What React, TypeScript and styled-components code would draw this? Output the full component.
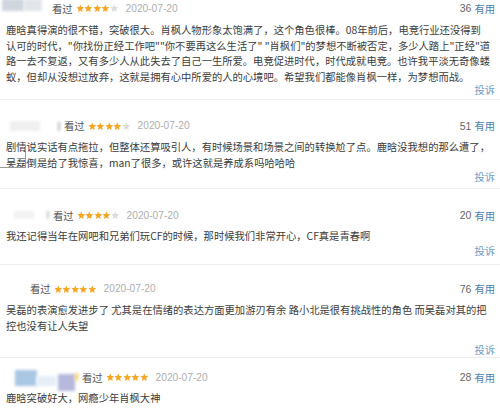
import React from "react";
import styled, { createGlobalStyle } from "styled-components";

const Global = createGlobalStyle`
  html, body { margin: 0; padding: 0; background: #fff; }
  body { font-family: "Noto Sans CJK SC", "Microsoft YaHei", sans-serif; overflow: hidden; }
`;

const Page = styled.div`
  width: 500px;
  height: 411px;
  overflow: hidden;
  position: relative;
  background: #fff;
`;

const Item = styled.div<{ $pt: number; $pb: number; $last?: boolean }>`
  position: relative;
  padding: ${(p) => p.$pt}px 5px ${(p) => p.$pb}px 6px;
  border-bottom: ${(p) => (p.$last ? "none" : "1px solid #eeeeee")};
`;

const Header = styled.div<{ $mb: number }>`
  display: flex;
  align-items: center;
  height: 16px;
  margin-bottom: ${(p) => p.$mb}px;
`;

const Name = styled.div<{ $w: number }>`
  width: ${(p) => p.$w}px;
  height: 14px;
  display: flex;
  align-items: center;
  flex-shrink: 0;
  margin-right: 3px;
  position: relative;
`;

const Tile = styled.span<{ $c: string; $w: number; $h: number; $x: number; $y: number }>`
  position: absolute;
  left: ${(p) => p.$x}px;
  top: ${(p) => p.$y}px;
  width: ${(p) => p.$w}px;
  height: ${(p) => p.$h}px;
  background: ${(p) => p.$c};
  filter: blur(1.5px);
`;

const Watched = styled.span`
  font-size: 10.3px;
  color: #555;
  margin-right: 3px;
`;

const Stars = styled.span`
  display: inline-flex;
  margin-right: 7px;
`;

const DateText = styled.span`
  font-family: "Liberation Sans", Arial, sans-serif;
  font-size: 10.2px;
  color: #aeaeae;
`;

const Vote = styled.span`
  margin-left: auto;
  font-size: 10.3px;
  color: #666;
  display: flex;
  align-items: center;
  gap: 3px;
`;

const Num = styled.span`
  font-family: "Liberation Sans", Arial, sans-serif;
  font-size: 10.5px;
  color: #666;
`;

const Useful = styled.span`
  color: #4a7fb5;
`;

const Body = styled.div`
  font-size: 10.3px;
  line-height: 15.7px;
  color: #3c3c3c;
  white-space: nowrap;
`;

const Report = styled.div<{ $mt: number }>`
  height: 14px;
  line-height: 14px;
  margin-top: ${(p) => p.$mt}px;
  text-align: right;
  font-size: 10.3px;
  color: #6f9bc8;
`;

const Frame = styled.div`
  position: absolute;
  left: 0;
  top: 45px;
  width: 25px;
  height: 22px;
  border-right: 1px solid #999;
  border-bottom: 1px solid #999;
`;

const Star = ({ on }: { on: boolean }) => (
  <svg width="8.6" height="8.6" viewBox="0 0 24 24">
    <path
      d="M12 1.5l3.1 7.1 7.7.7-5.8 5.1 1.7 7.6L12 18l-6.7 4 1.7-7.6L1.2 9.3l7.7-.7z"
      fill={on ? "#f5a623" : "#dcdcdc"}
    />
  </svg>
);

type TileT = { c: string; w: number; h: number; x: number; y: number };

type Review = {
  nameW: number;
  tiles: TileT[];
  stars: number;
  count: number;
  lines: string[];
  pt: number;
  pb: number;
  mb: number;
  rmt: number;
  report: boolean;
  frame?: boolean;
};

const reviews: Review[] = [
  {
    nameW: 43,
    tiles: [
      { c: "#cfd6de", w: 22, h: 12, x: -4, y: -2 },
      { c: "#e2e6ea", w: 18, h: 12, x: 18, y: -2 },
    ],
    stars: 4,
    count: 36,
    lines: [
      "鹿晗真得演的很不错，突破很大。肖枫人物形象太饱满了，这个角色很棒。08年前后，电竞行业还没得到",
      '认可的时代，"你找份正经工作吧""你不要再这么生活了" "肖枫们"的梦想不断被否定，多少人踏上"正经"道',
      "路一去不复返，又有多少人从此失去了自己一生所爱。电竞促进时代，时代成就电竞。也许我平淡无奇像蝼",
      "蚁，但却从没想过放弃，这就是拥有心中所爱的人的心境吧。希望我们都能像肖枫一样，为梦想而战。",
    ],
    pt: 0,
    pb: 2,
    mb: 6,
    rmt: -2,
    report: true,
  },
  {
    nameW: 55,
    tiles: [
      { c: "#f0f0f0", w: 30, h: 10, x: 4, y: 2 },
      { c: "#b9b9b9", w: 2, h: 9, x: 52, y: 3 },
    ],
    stars: 4,
    count: 51,
    lines: [
      "剧情说实话有点拖拉，但整体还算吸引人，有时候场景和场景之间的转换尬了点。鹿晗没我想的那么遭了，",
      "吴磊倒是给了我惊喜，man了很多，或许这就是养成系吗哈哈哈",
    ],
    pt: 18,
    pb: 4,
    mb: 5,
    rmt: 0,
    report: true,
    frame: true,
  },
  {
    nameW: 44,
    tiles: [
      { c: "#f2f2f2", w: 20, h: 8, x: 8, y: 3 },
      { c: "#c4c4c4", w: 1.5, h: 8, x: 41, y: 3 },
    ],
    stars: 4,
    count: 20,
    lines: ["我还记得当年在网吧和兄弟们玩CF的时候，那时候我们非常开心，CF真是青春啊"],
    pt: 18,
    pb: 6,
    mb: 5,
    rmt: 0,
    report: true,
  },
  {
    nameW: 21,
    tiles: [],
    stars: 5,
    count: 76,
    lines: [
      "吴磊的表演愈发进步了 尤其是在情绪的表达方面更加游刃有余 路小北是很有挑战性的角色 而吴磊对其的把",
      "控也没有让人失望",
    ],
    pt: 16,
    pb: 0,
    mb: 5,
    rmt: 10,
    report: true,
  },
  {
    nameW: 73,
    tiles: [
      { c: "#a9c6e3", w: 22, h: 16, x: 9, y: 0 },
      { c: "#e6eef6", w: 20, h: 10, x: 30, y: 6 },
      { c: "#b7b9dc", w: 17, h: 17, x: 52, y: 4 },
      { c: "#f2d36a", w: 3, h: 8, x: 69, y: 3 },
    ],
    stars: 5,
    count: 28,
    lines: ["鹿晗突破好大，网瘾少年肖枫大神"],
    pt: 11,
    pb: 0,
    mb: 5,
    rmt: 0,
    report: false,
  },
];

export default function App() {
  return (
    <Page>
      <Global />
      {reviews.map((r, i) => (
        <Item key={i} $pt={r.pt} $pb={r.pb} $last={i === reviews.length - 1}>
          {r.frame && <Frame />}
          <Header $mb={r.mb}>
            <Name $w={r.nameW}>
              {r.tiles.map((t, j) => (
                <Tile key={j} $c={t.c} $w={t.w} $h={t.h} $x={t.x} $y={t.y} />
              ))}
            </Name>
            <Watched>看过</Watched>
            <Stars>
              {[0, 1, 2, 3, 4].map((s) => (
                <Star key={s} on={s < r.stars} />
              ))}
            </Stars>
            <DateText>2020-07-20</DateText>
            <Vote>
              <Num>{r.count}</Num>
              <Useful>有用</Useful>
            </Vote>
          </Header>
          <Body>
            {r.lines.map((l, j) => (
              <div key={j}>{l}</div>
            ))}
          </Body>
          {r.report && <Report $mt={r.rmt}>投诉</Report>}
        </Item>
      ))}
    </Page>
  );
}
